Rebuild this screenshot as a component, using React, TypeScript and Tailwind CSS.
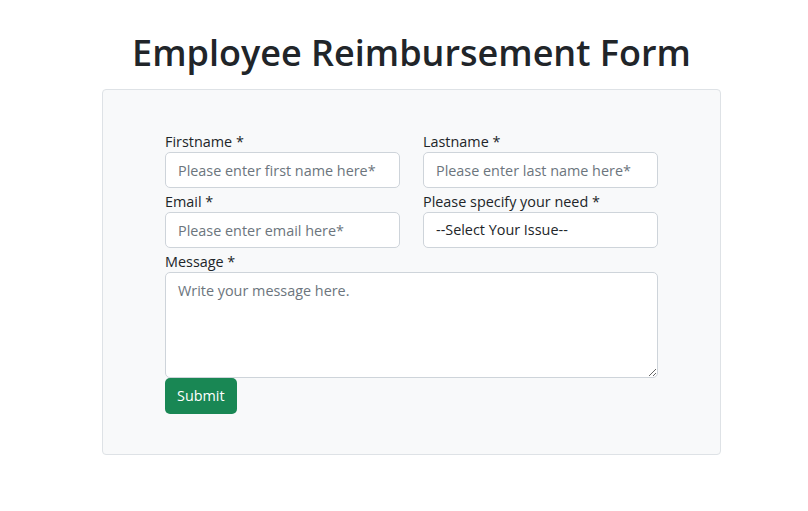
import React from "react";

const font = { fontFamily: '"Open Sans", "Noto Sans", sans-serif' };

type FieldProps = {
  label: string;
  children: React.ReactNode;
};

function Field({ label, children }: FieldProps) {
  return (
    <div className="flex flex-col">
      <label className="pt-1 text-[14.4px] leading-5 text-[#212529]">{label}</label>
      {children}
    </div>
  );
}

const inputCls =
  "h-[36px] w-full rounded-[5px] border border-[#ced4da] bg-white px-3 text-[14.4px] text-[#212529] placeholder:text-[#6c757d] outline-none";

export default function App() {
  return (
    <div className="min-h-screen bg-white" style={font}>
      <div className="ml-[102px] w-[619px] pt-[25px]">
        <h1 className="text-center text-[36px] font-semibold leading-[56px] text-[#212529]">
          Employee Reimbursement Form
        </h1>
        <div className="mt-[8px] rounded-[4px] border border-[#dee2e6] bg-[#f8f9fa] px-[62px] pt-[38px] pb-[40px]">
          <form className="flex flex-col" onSubmit={(e) => e.preventDefault()}>
            <div className="grid grid-cols-2 gap-x-[23px]">
              <Field label="Firstname *">
                <input className={inputCls} placeholder="Please enter first name here*" />
              </Field>
              <Field label="Lastname *">
                <input className={inputCls} placeholder="Please enter last name here*" />
              </Field>
              <Field label="Email *">
                <input className={inputCls} placeholder="Please enter email here*" />
              </Field>
              <Field label="Please specify your need *">
                <select className={inputCls + " appearance-none"} defaultValue="">
                  <option value="">--Select Your Issue--</option>
                  <option>Travel</option>
                  <option>Food</option>
                  <option>Other</option>
                </select>
              </Field>
            </div>
            <Field label="Message *">
              <textarea
                className="block h-[106px] w-full rounded-[5px] border border-[#ced4da] bg-white px-3 py-[6px] text-[14.4px] leading-6 text-[#212529] placeholder:text-[#6c757d] outline-none"
                placeholder="Write your message here."
              />
            </Field>
            <div>
              <button
                type="submit"
                className="h-[36px] rounded-[5px] bg-[#198754] px-3 text-[14.4px] text-white"
              >
                Submit
              </button>
            </div>
          </form>
        </div>
      </div>
    </div>
  );
}
